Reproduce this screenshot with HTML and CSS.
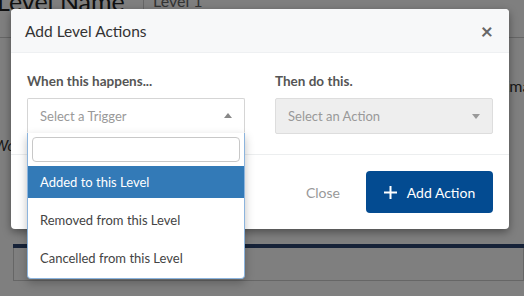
FILE: index.html
```html
<!DOCTYPE html>
<html lang="en">
  <head>
    <meta charset="UTF-8" />
    <meta name="viewport" content="width=device-width, initial-scale=1.0" />
    <title>Add Level Actions</title>
    <link rel="stylesheet" href="styles.css">
  </head>
  <body>
    <div class="page">
      <div class="page-head">
        <h1>Level Name</h1>
        <div class="name-field">Level 1</div>
      </div>
      <div class="page-row">
        <span class="note">Workflow</span>
        <span class="side">Email</span>
      </div>
      <div class="page-table">
        <div class="table-head">Name</div>
      </div>
    </div>

    <div class="backdrop">
      <div class="modal">
        <div class="modal-header">
          <h4>Add Level Actions</h4>
          <span class="close-x">&times;</span>
        </div>
        <div class="modal-body">
          <div class="col">
            <label>When this happens...</label>
            <div class="select open">
              <span class="placeholder">Select a Trigger</span>
              <span class="caret up"></span>
            </div>
            <div class="dropdown">
              <div class="search"><input type="text" /></div>
              <ul>
                <li class="active">Added to this Level</li>
                <li>Removed from this Level</li>
                <li>Cancelled from this Level</li>
              </ul>
            </div>
          </div>
          <div class="col">
            <label>Then do this.</label>
            <div class="select disabled">
              <span class="placeholder">Select an Action</span>
              <span class="caret"></span>
            </div>
          </div>
        </div>
        <div class="modal-footer">
          <button class="btn-link">Close</button>
          <button class="btn-primary">
            <svg width="13" height="13" viewBox="0 0 13 13">
              <path d="M6.5 0v13M0 6.5h13" stroke="#fff" stroke-width="2" fill="none" />
            </svg>
            Add Action
          </button>
        </div>
      </div>
    </div>
  </body>
</html>
```

FILE: styles.css
```css
html,
body {
  margin: 0;
  padding: 0;
}
body {
  width: 524px;
  height: 296px;
  overflow: hidden;
  position: relative;
  background: #fff;
  font-family: 'Lato', 'Open Sans', sans-serif;
  color: #333;
}
/* page behind the dialog */
.page-head {
  display: flex;
  align-items: flex-start;
  height: 58px;
  margin-top: -21px;
  border-bottom: 1px solid #ccc;
}
.page-head h1 {
  margin: 0 0 0 -3px;
  width: 146px;
  white-space: nowrap;
  font-size: 25px;
  font-weight: 400;
  color: #222;
  border-right: 1px solid #ccc;
  line-height: 44px;
}
.name-field {
  padding-left: 9px;
  line-height: 44px;
  margin-top: 0;
  font-size: 16px;
  color: #666;
}
.page-row {
  display: flex;
  justify-content: space-between;
  align-items: flex-start;
  height: 170px;
  margin-top: 36px;
}
.note {
  margin-top: 62px;
  font-style: italic;
  font-size: 15px;
  margin-left: -6px;
}
.side {
  font-size: 16px;
  margin-right: -14px;
  margin-top: 2px;
}
.page-table {
  margin-left: 13px;
  border-top: 4px solid #2c4470;
}
.table-head {
  height: 32px;
  line-height: 32px;
  padding-left: 12px;
  border: 1px solid #ccc;
  border-top: none;
  font-size: 15px;
}
/* overlay */
.backdrop {
  position: absolute;
  inset: 0;
  background: rgba(0, 0, 0, 0.5);
}
.modal {
  width: 498px;
  margin: 9px 0 0 11px;
  background: #fff;
  border-radius: 4px;
  box-shadow: 0 3px 9px rgba(0, 0, 0, 0.4);
}
.modal-header {
  display: flex;
  justify-content: space-between;
  align-items: center;
  height: 43px;
  padding: 0 16px 0 14px;
  background: #f7f8f9;
  border-bottom: 1px solid #eef0f2;
  border-radius: 4px 4px 0 0;
}
.modal-header h4 {
  margin: 0;
  font-size: 15.5px;
  font-weight: 400;
  color: #333;
}
.close-x {
  font-size: 21px;
  font-weight: 700;
  color: #666;
  line-height: 1;
}
.modal-body {
  display: flex;
  gap: 30px;
  padding: 20px 16px 20px;
  border-bottom: 1px solid #eceeef;
}
.col {
  flex: 1;
  position: relative;
}
label {
  display: block;
  font-size: 13.5px;
  font-weight: 700;
  color: #555;
  margin-bottom: 9px;
}
.select {
  display: flex;
  justify-content: space-between;
  align-items: center;
  height: 33px;
  padding: 0 12px;
  border: 1px solid #d5d5d5;
  border-radius: 2px;
  font-size: 13px;
}
.select.open {
  border-bottom-color: #fff;
  border-radius: 2px 2px 0 0;
}
.select.disabled {
  height: 34px;
  background: #eee;
  border-color: #ddd;
}
.placeholder {
  color: #999;
}
.caret {
  width: 0;
  height: 0;
  border-left: 4px solid transparent;
  border-right: 4px solid transparent;
  border-top: 5px solid #999;
}
.caret.up {
  border-top: none;
  border-bottom: 5px solid #888;
}
.dropdown {
  position: absolute;
  left: 0;
  right: 0;
  top: 60px;
  z-index: 2;
  background: #fff;
  border: 1px solid #8cb4dd;
  border-top: none;
  border-radius: 0 0 4px 4px;
  box-shadow: 0 4px 10px rgba(0, 0, 0, 0.25);
}
.search {
  padding: 4px 4px 4px;
}
.search input {
  display: block;
  box-sizing: border-box;
  width: 100%;
  height: 25px;
  border: 1px solid #c8c8c8;
  border-radius: 4px;
  outline: none;
}
.dropdown ul {
  list-style: none;
  margin: 0;
  padding: 0 0 4px;
}
.dropdown li {
  height: 32px;
  line-height: 32px;
  padding: 0 12px;
  margin-bottom: 6px;
  font-size: 13px;
  color: #444;
}
.dropdown li:last-child {
  margin-bottom: 0;
}
.dropdown li.active {
  background: #337ab7;
  color: #fff;
}
.modal-footer {
  display: flex;
  justify-content: flex-end;
  align-items: center;
  gap: 16px;
  padding: 16px 16px 16px;
}
button {
  font-family: inherit;
  cursor: pointer;
  border: none;
}
.btn-link {
  background: none;
  color: #999;
  font-size: 14px;
  padding: 0 10px;
}
.btn-primary {
  display: flex;
  align-items: center;
  justify-content: center;
  gap: 10px;
  width: 127px;
  height: 42px;
  background: #034b91;
  color: #fff;
  font-size: 14px;
  border-radius: 4px;
}
```
